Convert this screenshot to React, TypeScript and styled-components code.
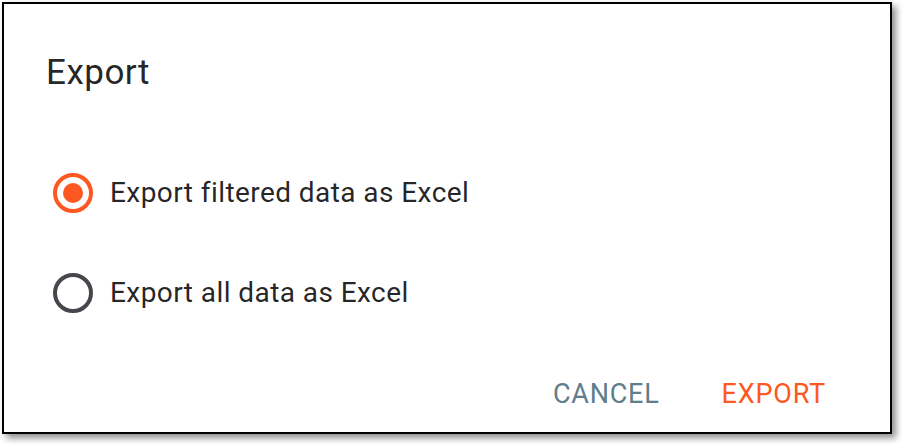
import { useState } from "react";
import styled, { createGlobalStyle } from "styled-components";

const GlobalStyle = createGlobalStyle`
  html, body {
    margin: 0;
    padding: 0;
    background: #ffffff;
  }
  body {
    font-family: Roboto, "Liberation Sans", Arial, sans-serif;
  }
`;

const ORANGE = "#ff5722";

const Page = styled.div`
  padding: 2px;
  width: 902px;
  height: 444px;
  box-sizing: border-box;
`;

const Dialog = styled.div`
  width: 890px;
  height: 432px;
  box-sizing: border-box;
  border: 2px solid #000;
  background: #fff;
  box-shadow: 4px 4px 7px rgba(0, 0, 0, 0.45);
  display: flex;
  flex-direction: column;
`;

const Title = styled.h2`
  margin: 45px 0 0;
  padding: 0 0 0 42px;
  font-size: 35px;
  line-height: 48px;
  font-weight: 400;
  color: rgba(0, 0, 0, 0.87);
  letter-spacing: 0.5px;
`;

const Options = styled.div`
  margin-top: 46px;
  display: flex;
  flex-direction: column;
`;

const Option = styled.label`
  height: 100px;
  display: flex;
  align-items: center;
  padding-left: 45px;
  gap: 13px;
  cursor: pointer;
`;

const RadioBox = styled.span`
  width: 48px;
  height: 48px;
  display: flex;
  align-items: center;
  justify-content: center;
`;

const OptionText = styled.span`
  font-size: 28px;
  line-height: 40px;
  color: rgba(0, 0, 0, 0.87);
  letter-spacing: 0.43px;
`;

const Actions = styled.div`
  margin-top: auto;
  display: flex;
  justify-content: flex-end;
  gap: 30px;
  padding: 0 48px 14px 0;
`;

const Button = styled.button<{ $color: string }>`
  border: none;
  background: transparent;
  height: 48px;
  padding: 0 16px;
  font-family: Roboto, "Liberation Sans", Arial, sans-serif;
  font-size: 27px;
  font-weight: 400;
  letter-spacing: 0.8px;
  text-transform: uppercase;
  color: ${(p) => p.$color};
  cursor: pointer;
`;

const Radio = ({ checked }: { checked: boolean }) => (
  <RadioBox>
    <svg width="48" height="48" viewBox="0 0 48 48">
      <circle
        cx="24"
        cy="24"
        r="18"
        fill="none"
        stroke={checked ? ORANGE : "#45474d"}
        strokeWidth="4"
      />
      {checked && <circle cx="24" cy="24" r="10" fill={ORANGE} />}
    </svg>
  </RadioBox>
);

const options = ["Export filtered data as Excel", "Export all data as Excel"];

export default function App() {
  const [selected, setSelected] = useState(0);
  return (
    <>
      <GlobalStyle />
      <Page>
        <Dialog>
          <Title>Export</Title>
          <Options>
            {options.map((text, i) => (
              <Option key={text} onClick={() => setSelected(i)}>
                <Radio checked={selected === i} />
                <OptionText>{text}</OptionText>
              </Option>
            ))}
          </Options>
          <Actions>
            <Button $color="#607d8b">Cancel</Button>
            <Button $color={ORANGE}>Export</Button>
          </Actions>
        </Dialog>
      </Page>
    </>
  );
}
